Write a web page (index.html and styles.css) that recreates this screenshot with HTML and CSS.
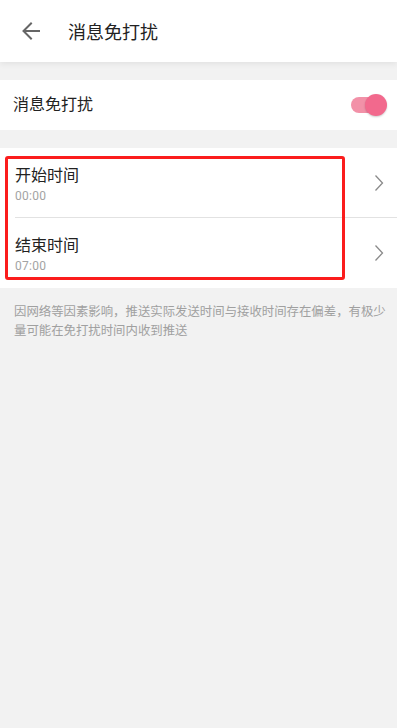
FILE: index.html
```html
<!DOCTYPE html>
<html lang="zh-CN">
<head>
<meta charset="utf-8">
<link rel="stylesheet" href="styles.css">
</head>
<body>
<div class="page">
  <header class="topbar">
    <span class="back">
      <svg width="20" height="20" viewBox="0 0 20 20"><path d="M18 10H3M10 2.5L2.5 10L10 17.5" fill="none" stroke="#666" stroke-width="2" stroke-linecap="square"/></svg>
    </span>
    <h1 class="title">消息免打扰</h1>
  </header>

  <section class="card switch-row">
    <span class="label">消息免打扰</span>
    <span class="toggle"><span class="track"></span><span class="knob"></span></span>
  </section>

  <section class="card times">
    <div class="time-row">
      <div class="time-text">
        <div class="label">开始时间</div>
        <div class="sub">00:00</div>
      </div>
      <svg class="chev" width="10" height="18" viewBox="0 0 10 18"><path d="M1.5 1.5L8.5 9L1.5 16.5" fill="none" stroke="#8a8a8a" stroke-width="1.3"/></svg>
    </div>
    <div class="divider"></div>
    <div class="time-row">
      <div class="time-text">
        <div class="label">结束时间</div>
        <div class="sub">07:00</div>
      </div>
      <svg class="chev" width="10" height="18" viewBox="0 0 10 18"><path d="M1.5 1.5L8.5 9L1.5 16.5" fill="none" stroke="#8a8a8a" stroke-width="1.3"/></svg>
    </div>
    <div class="highlight"></div>
  </section>

  <p class="note">因网络等因素影响，推送实际发送时间与接收时间存在偏差，有极少量可能在免打扰时间内收到推送</p>
</div>
</body>
</html>
```

FILE: styles.css
```css
* { box-sizing: border-box; }
html, body { margin: 0; padding: 0; }
body {
  background: #f2f2f2;
  font-family: "Roboto", "Noto Sans CJK SC", sans-serif;
  color: #222;
}
.page {
  width: 397px;
  min-height: 728px;
  background: #f2f2f2;
}
.topbar {
  height: 62px;
  background: #fff;
  display: flex;
  align-items: center;
  position: relative;
  box-shadow: 0 2px 6px rgba(0,0,0,0.07);
}
.back {
  width: 20px;
  height: 20px;
  margin-left: 21px;
  display: flex;
}
.title {
  margin: 0 0 0 27px;
  font-size: 18px;
  font-weight: 400;
  color: #222;
  letter-spacing: 0;
}
.card { background: #fff; }
.switch-row {
  margin-top: 18px;
  height: 50px;
  display: flex;
  align-items: center;
  justify-content: space-between;
  padding: 0 10px 0 13px;
}
.label {
  font-size: 16px;
  color: #222;
  line-height: 20px;
}
.toggle {
  position: relative;
  width: 36px;
  height: 22px;
}
.track {
  position: absolute;
  left: 0;
  top: 3px;
  width: 30px;
  height: 16px;
  border-radius: 8px;
  background: #f291a8;
}
.knob {
  position: absolute;
  right: 0;
  top: 0;
  width: 22px;
  height: 22px;
  border-radius: 50%;
  background: #f2698d;
  box-shadow: 0 1px 2px rgba(0,0,0,0.2);
}
.times {
  margin-top: 18px;
  position: relative;
}
.time-row {
  height: 69px;
  display: flex;
  align-items: center;
  justify-content: space-between;
  padding: 0 13px 0 15px;
}
.time-row + .divider + .time-row { height: 70px; }
.time-text { display: flex; flex-direction: column; padding-top: 4px; }
.sub {
  font-size: 12px;
  color: #a3a3a3;
  line-height: 16px;
  margin-top: 2px;
  letter-spacing: 0.3px;
}
.divider {
  height: 1px;
  background: #e2e2e2;
  margin-left: 15px;
}
.highlight {
  position: absolute;
  left: 5px;
  top: 8px;
  width: 340px;
  height: 124px;
  border: 3px solid #fb1d1d;
  border-radius: 3px;
}
.note {
  margin: 14px 0 0 0;
  padding: 0 0 0 14px;
  font-size: 12.4px;
  line-height: 19px;
  color: #a0a0a0;
  font-family: "Noto Sans CJK SC", sans-serif;
}
```
